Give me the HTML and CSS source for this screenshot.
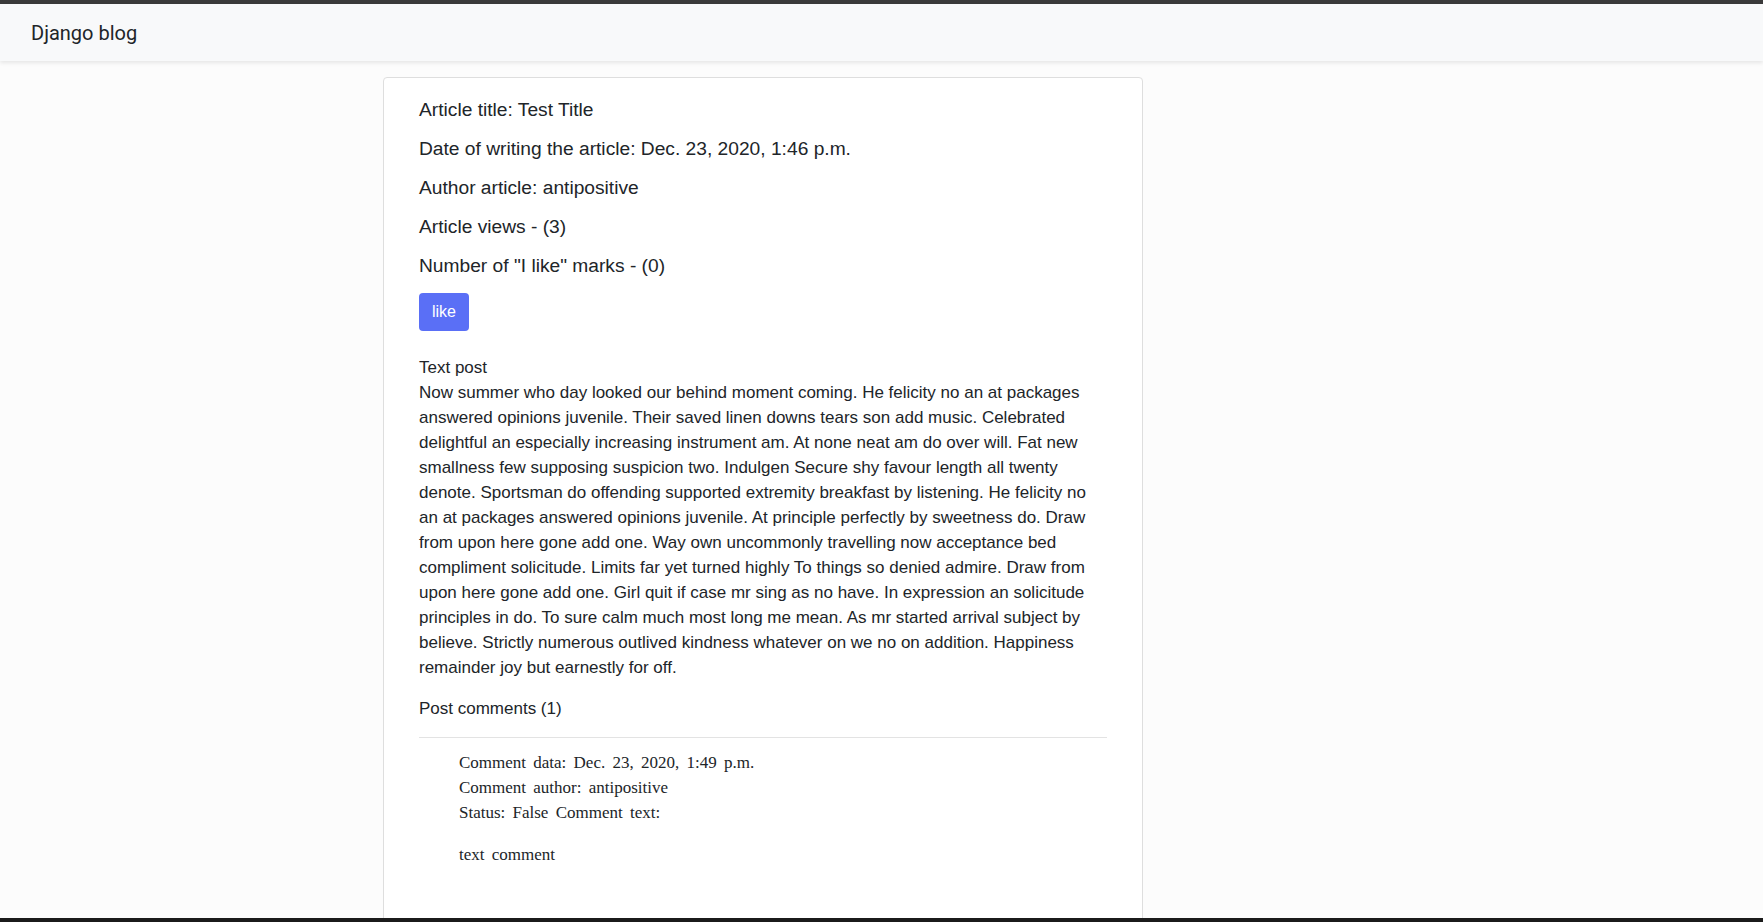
FILE: index.html
```html
<!DOCTYPE html>
<html lang="en">
<head>
<meta charset="utf-8">
<title>Django blog</title>
<link rel="stylesheet" href="styles.css">
</head>
<body>
<div class="topbar"></div>
<nav class="navbar"><a class="brand" href="#">Django blog</a></nav>
<main class="page">
  <article class="card">
    <p class="meta">Article title: Test Title</p>
    <p class="meta">Date of writing the article: Dec. 23, 2020, 1:46 p.m.</p>
    <p class="meta">Author article: antipositive</p>
    <p class="meta">Article views - (3)</p>
    <p class="meta">Number of "I like" marks - (0)</p>
    <form class="like-form"><button type="button" class="btn-like">like</button></form>
    <p class="post-text">Text post<br>Now summer who day looked our behind moment coming. He felicity no an at packages answered opinions juvenile. Their saved linen downs tears son add music. Celebrated delightful an especially increasing instrument am. At none neat am do over will. Fat new smallness few supposing suspicion two. Indulgen Secure shy favour length all twenty denote. Sportsman do offending supported extremity breakfast by listening. He felicity no an at packages answered opinions juvenile. At principle perfectly by sweetness do. Draw from upon here gone add one. Way own uncommonly travelling now acceptance bed compliment solicitude. Limits far yet turned highly To things so denied admire. Draw from upon here gone add one. Girl quit if case mr sing as no have. In expression an solicitude principles in do. To sure calm much most long me mean. As mr started arrival subject by believe. Strictly numerous outlived kindness whatever on we no on addition. Happiness remainder joy but earnestly for off.</p>
    <p class="post-text comments-title">Post comments (1)</p>
    <hr class="divider">
    <div class="comment">
      Comment data: Dec. 23, 2020, 1:49 p.m.<br>
      Comment author: antipositive<br>
      Status: False Comment text:
      <p class="comment-text">text comment</p>
    </div>
  </article>
</main>
<div class="bottombar"></div>
</body>
</html>
```
FILE: styles.css
```css
html, body {
  margin: 0;
  padding: 0;
}
body {
  background: #fcfcfc;
  color: #212529;
  font-family: "Liberation Sans", Arial, sans-serif;
  overflow: hidden;
  height: 922px;
}
.topbar {
  height: 4px;
  background: #3a3a3a;
}
.navbar {
  height: 57px;
  display: flex;
  align-items: center;
  padding: 0 31px;
  background: #f8f9fa;
  box-shadow: 0 2px 4px rgba(0, 0, 0, 0.09);
  position: relative;
  z-index: 1;
}
.brand {
  font-family: Roboto, "Liberation Sans", sans-serif;
  font-size: 20px;
  color: #212529;
  text-decoration: none;
  line-height: 30px;
}
.page {
  display: grid;
  grid-template-columns: 383px 760px 1fr;
  padding-top: 16px;
}
.card {
  grid-column: 2;
  background: #fff;
  border: 1px solid #dedede;
  border-radius: 4px;
  padding: 20px 35px 0 35px;
  min-height: 900px;
}
.meta {
  margin: 0 0 16px 0;
  font-size: 19.2px;
  line-height: 1.2;
}
.like-form {
  margin: 0 0 24px 0;
}
.btn-like {
  font-family: "Liberation Sans", Arial, sans-serif;
  font-size: 16px;
  line-height: 24px;
  padding: 7px 13px;
  border: none;
  border-radius: 4px;
  background: #5a6ff6;
  color: #fff;
  cursor: pointer;
}
.post-text {
  margin: 0 0 16px 0;
  font-size: 17px;
  line-height: 25px;
}
.comments-title {
  margin-bottom: 16px;
}
.divider {
  border: 0;
  border-top: 1px solid #e3e3e3;
  margin: 0 0 12px 0;
}
.comment {
  padding-left: 40px;
  font-family: "Liberation Serif", "Times New Roman", serif;
  font-size: 17px;
  line-height: 25px;
  word-spacing: 3px;
}
.comment-text {
  margin: 17px 0 0 0;
}
.bottombar {
  position: fixed;
  left: 0;
  right: 0;
  bottom: 0;
  height: 4px;
  background: #1b1b1b;
  z-index: 2;
}
```
